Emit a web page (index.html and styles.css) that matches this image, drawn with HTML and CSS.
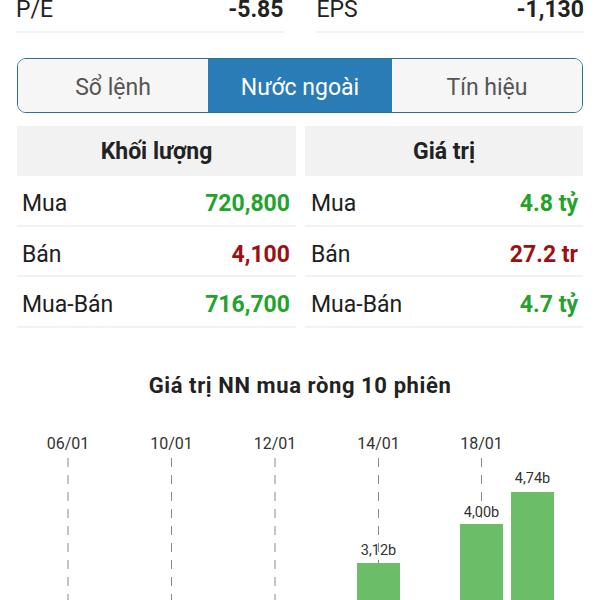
FILE: index.html
```html
<!DOCTYPE html>
<html lang="vi">

<head>
    <meta charset="UTF-8">
    <meta name="viewport" content="width=device-width, initial-scale=1.0">
    <title>Nước ngoài</title>
    <link rel="stylesheet" href="styles.css">
</head>

<body>

    <!-- Chỉ số cơ bản -->
    <div class="stats">
        <div class="stat"><span>P/E</span><strong>-5.85</strong></div>
        <div class="stat"><span>EPS</span><strong>-1,130</strong></div>
    </div>

    <!-- Tabs -->
    <nav class="tabs">
        <div class="tab">Sổ lệnh</div>
        <div class="tab active">Nước ngoài</div>
        <div class="tab">Tín hiệu</div>
    </nav>

    <!-- Giao dịch nước ngoài -->
    <section class="foreign">
        <div class="panel">
            <div class="panel-head">Khối lượng</div>
            <div class="row"><span>Mua</span><strong class="up">720,800</strong></div>
            <div class="row"><span>Bán</span><strong class="down">4,100</strong></div>
            <div class="row"><span>Mua-Bán</span><strong class="up">716,700</strong></div>
        </div>
        <div class="panel">
            <div class="panel-head">Giá trị</div>
            <div class="row"><span>Mua</span><strong class="up">4.8 tỷ</strong></div>
            <div class="row"><span>Bán</span><strong class="down">27.2 tr</strong></div>
            <div class="row"><span>Mua-Bán</span><strong class="up">4.7 tỷ</strong></div>
        </div>
    </section>

    <!-- Biểu đồ -->
    <section class="chart">
        <h2>Giá trị NN mua ròng 10 phiên</h2>
        <svg class="chart-svg" width="600" height="180" viewBox="0 0 600 180">
            <g class="grid">
                <line x1="68" y1="38" x2="68" y2="180" />
                <line x1="171.5" y1="38" x2="171.5" y2="180" />
                <line x1="275" y1="38" x2="275" y2="180" />
                <line x1="378.5" y1="38" x2="378.5" y2="180" />
                <line x1="481.5" y1="38" x2="481.5" y2="180" />
            </g>
            <g class="dates">
                <text x="68" y="29">06/01</text>
                <text x="171.5" y="29">10/01</text>
                <text x="275" y="29">12/01</text>
                <text x="378.5" y="29">14/01</text>
                <text x="481.5" y="29">18/01</text>
            </g>
            <g class="bars">
                <rect x="357" y="143" width="43" height="60" />
                <rect x="460" y="104" width="43" height="90" />
                <rect x="511" y="72" width="43" height="120" />
            </g>
            <g class="labels">
                <text x="378.5" y="135">3,12b</text>
                <text x="481.5" y="97">4,00b</text>
                <text x="532.5" y="63">4,74b</text>
            </g>
        </svg>
    </section>

</body>

</html>
```

FILE: styles.css
```css
body {
    font-family: Roboto, 'Noto Sans', sans-serif;
    margin: 0;
    width: 600px;
    height: 600px;
    overflow: hidden;
    background-color: #fff;
    color: #222;
}

/* Stats row */
.stats {
    display: grid;
    grid-template-columns: 1fr 1fr;
    column-gap: 33px;
    padding: 0 16px;
    margin-top: -3px;
}

.stat {
    display: flex;
    justify-content: space-between;
    font-size: 23px;
    line-height: 26px;
    padding-bottom: 8px;
    border-bottom: 2px solid #f2f2f2;
}

.stat strong {
    font-weight: 700;
}

/* Tabs */
.tabs {
    display: grid;
    grid-template-columns: 190px 1fr 190px;
    box-sizing: border-box;
    height: 55px;
    margin: 25px 17px 0;
    border: 1.5px solid #2d6f8f;
    border-radius: 9px;
    overflow: hidden;
}

.tab {
    display: flex;
    align-items: center;
    justify-content: center;
    padding-top: 4px;
    background-color: #f6f6f6;
    color: #555;
    font-size: 23px;
}

.tab.active {
    background-color: #2a7cb6;
    color: #fff;
}

/* Foreign trade table */
.foreign {
    display: grid;
    grid-template-columns: 279px 278px;
    column-gap: 9px;
    padding: 0 17px;
    margin-top: 13px;
}

.panel-head {
    height: 50px;
    display: flex;
    align-items: center;
    justify-content: center;
    background-color: #f2f2f2;
    font-size: 23px;
    font-weight: 700;
    color: #222;
}

.row {
    display: flex;
    justify-content: space-between;
    align-items: center;
    box-sizing: border-box;
    height: 50.5px;
    padding: 7px 6px 0 5px;
    border-bottom: 2px solid #f2f2f2;
    font-size: 23px;
    color: #1e1e1e;
}

.panel + .panel .row {
    padding: 7px 5px 0 6px;
}

.row strong {
    font-weight: 700;
}

.up {
    color: #23a32b;
}

.down {
    color: #a00f0f;
}

/* Chart */
.chart h2 {
    margin: 45px 0 0;
    font-size: 22px;
    line-height: 26px;
    letter-spacing: 0.6px;
    font-weight: 700;
    text-align: center;
    color: #222;
}

.chart-svg {
    display: block;
    margin-top: 21px;
}

.grid line {
    stroke: #8a8a8a;
    stroke-width: 1;
    stroke-dasharray: 9 8;
}

.dates text {
    font-size: 16px;
    fill: #333;
    text-anchor: middle;
}

.bars rect {
    fill: #6bbd67;
}

.labels text {
    font-size: 14.5px;
    fill: #333;
    text-anchor: middle;
}
```
